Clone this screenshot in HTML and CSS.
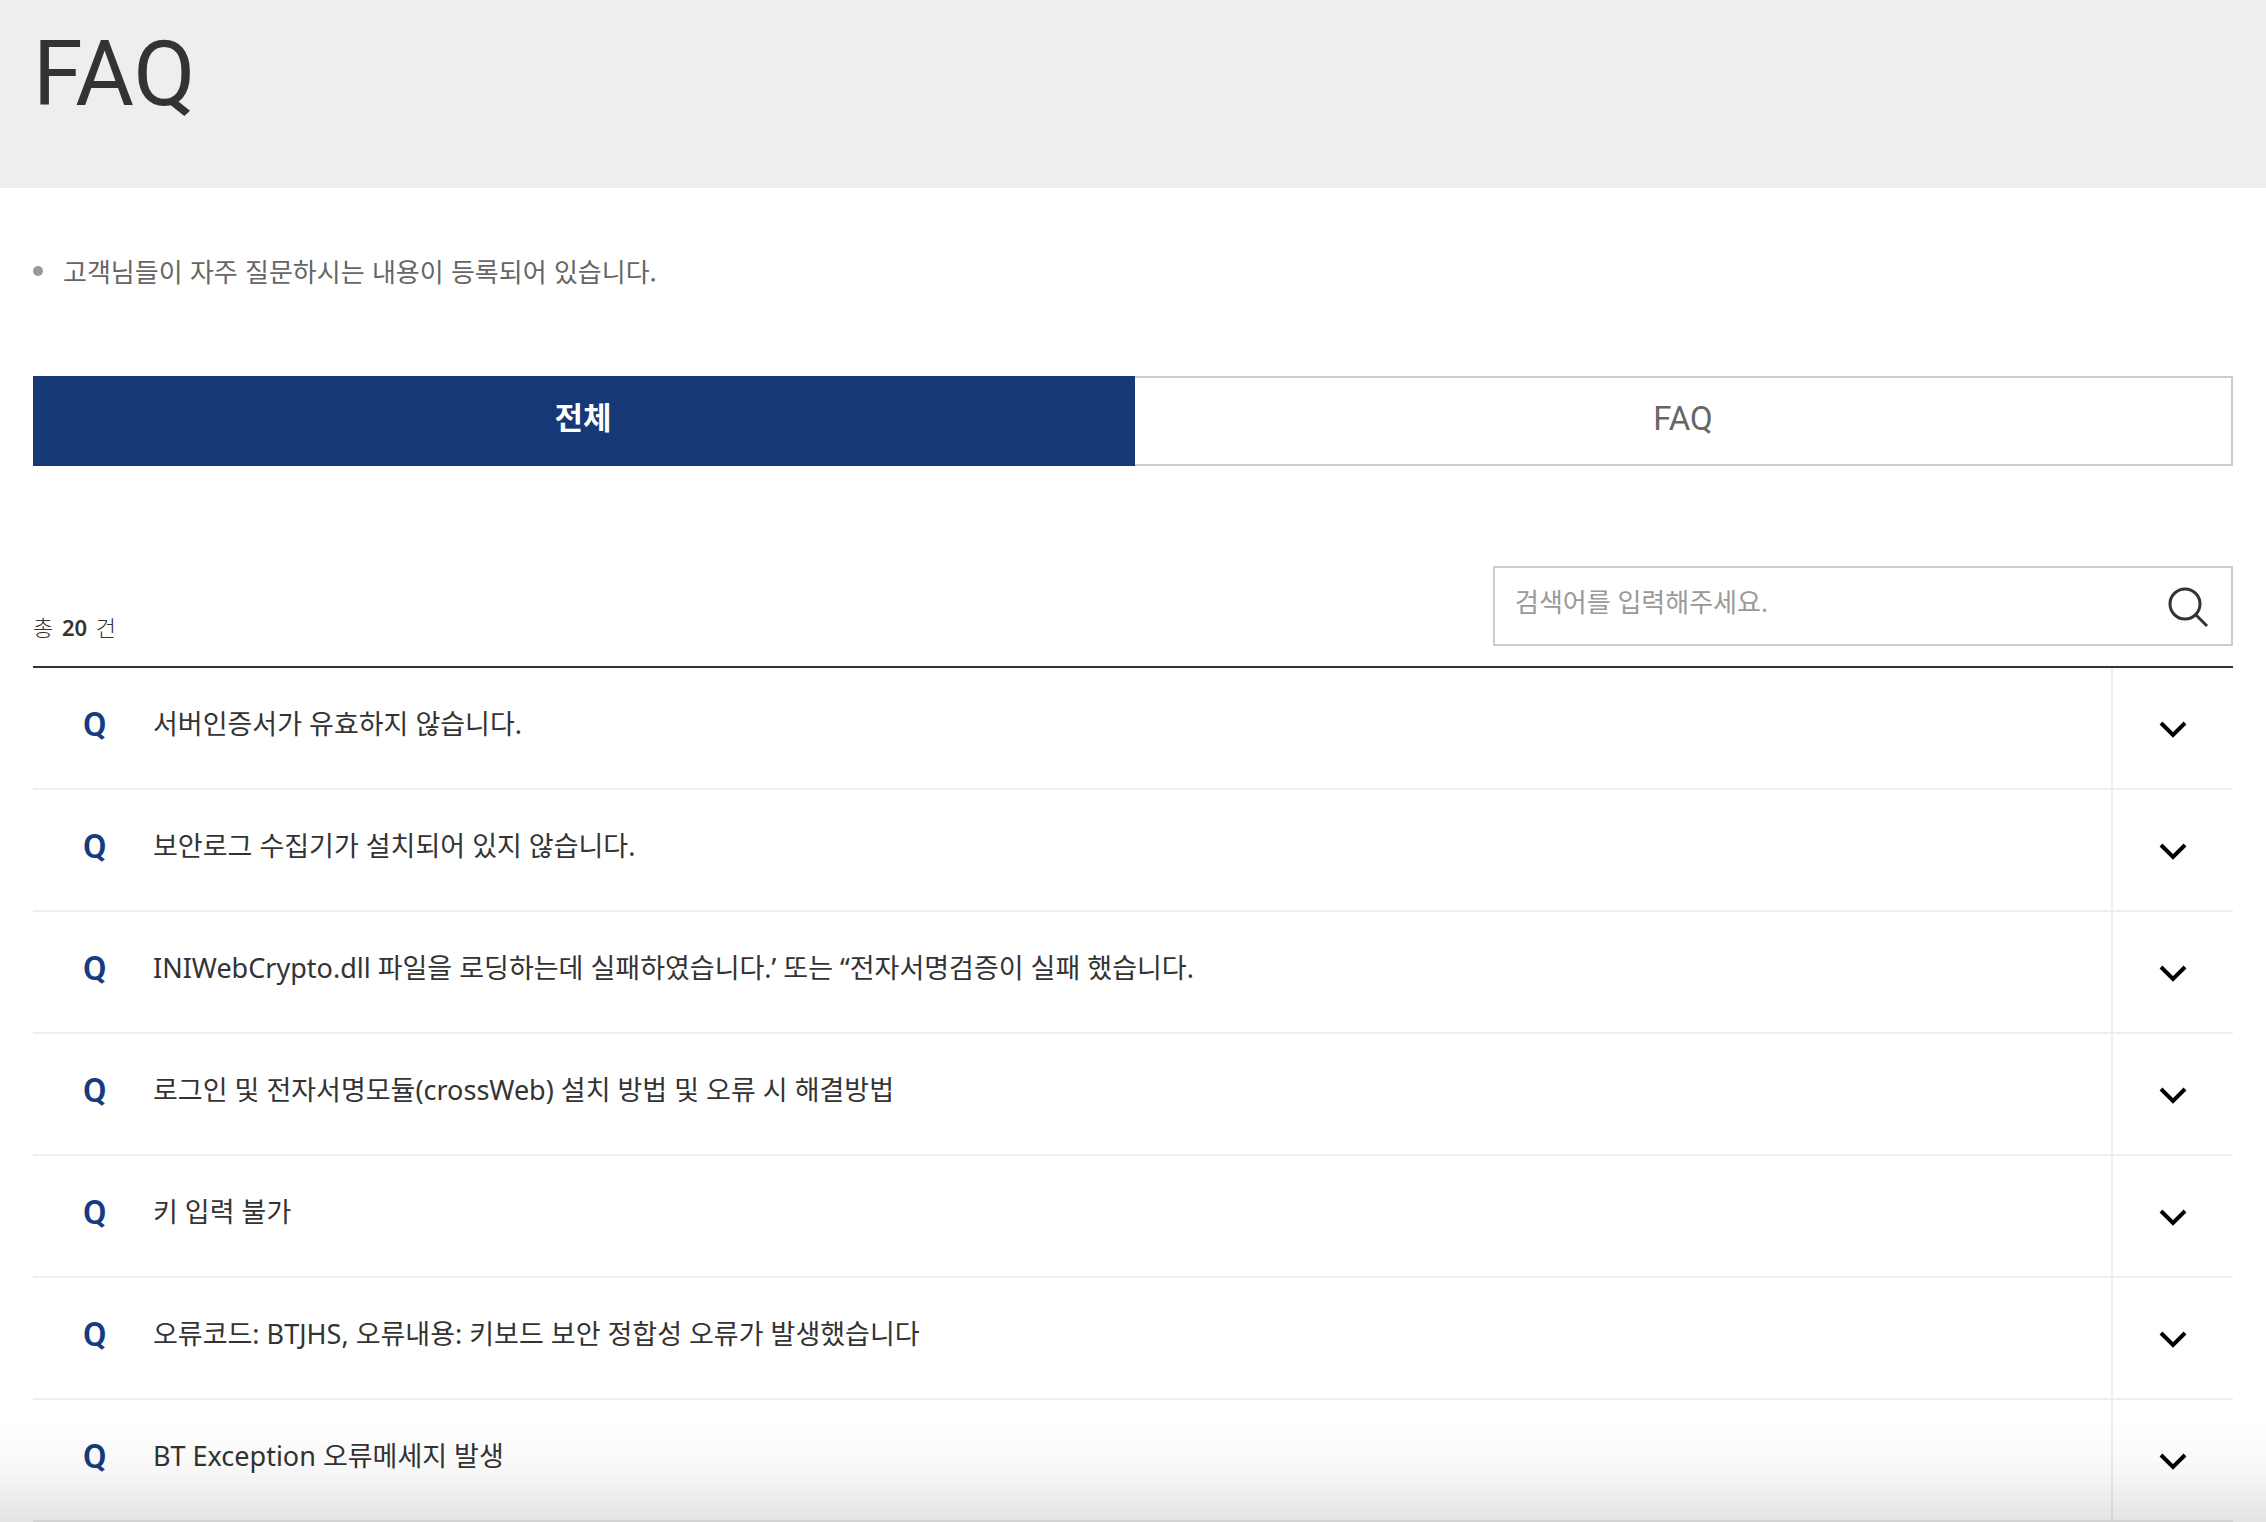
FILE: index.html
```html
<!DOCTYPE html>
<html lang="ko">
<head>
<meta charset="utf-8">
<meta name="viewport" content="width=device-width, initial-scale=1">
<title>FAQ</title>
<link rel="stylesheet" href="styles.css">
</head>
<body>
<svg class="defs" aria-hidden="true">
  <symbol id="chevron" viewBox="0 0 28 18"><path d="M2 2l12 12L26 2" fill="none" stroke="#000" stroke-width="4"/></symbol>
</svg>
<header class="page-header">
  <h1 class="page-title">FAQ</h1>
</header>
<main class="content">
  <ul class="notice">
    <li class="notice-item">고객님들이 자주 질문하시는 내용이 등록되어 있습니다.</li>
  </ul>
  <nav class="tabs" aria-label="분류">
    <a class="tab tab-active" href="#all" aria-current="page">전체</a>
    <a class="tab" href="#faq">FAQ</a>
  </nav>
  <div class="toolbar">
    <p class="total">총 <strong class="total-count">20</strong> 건</p>
    <form class="search" role="search">
      <input class="search-input" type="text" aria-label="검색어" placeholder="검색어를 입력해주세요.">
      <button class="search-button" type="submit" aria-label="검색">
        <svg class="search-icon" viewBox="0 0 42 42" fill="none" stroke="#333" stroke-width="3"><circle cx="18" cy="18" r="15"/><path d="M28.500 28.500L40 40"/></svg>
      </button>
    </form>
  </div>
  <ul class="faq-list">
    <li class="faq-item"><button class="question" type="button" aria-expanded="false"><span class="mark">Q</span><span class="question-text">서버인증서가 유효하지 않습니다.</span><span class="toggle"><svg class="chevron"><use href="#chevron"/></svg></span></button></li>
    <li class="faq-item"><button class="question" type="button" aria-expanded="false"><span class="mark">Q</span><span class="question-text">보안로그 수집기가 설치되어 있지 않습니다.</span><span class="toggle"><svg class="chevron"><use href="#chevron"/></svg></span></button></li>
    <li class="faq-item"><button class="question" type="button" aria-expanded="false"><span class="mark">Q</span><span class="question-text">INIWebCrypto.dll 파일을 로딩하는데 실패하였습니다.’ 또는 “전자서명검증이 실패 했습니다.</span><span class="toggle"><svg class="chevron"><use href="#chevron"/></svg></span></button></li>
    <li class="faq-item"><button class="question" type="button" aria-expanded="false"><span class="mark">Q</span><span class="question-text">로그인 및 전자서명모듈(crossWeb) 설치 방법 및 오류 시 해결방법</span><span class="toggle"><svg class="chevron"><use href="#chevron"/></svg></span></button></li>
    <li class="faq-item"><button class="question" type="button" aria-expanded="false"><span class="mark">Q</span><span class="question-text">키 입력 불가</span><span class="toggle"><svg class="chevron"><use href="#chevron"/></svg></span></button></li>
    <li class="faq-item"><button class="question" type="button" aria-expanded="false"><span class="mark">Q</span><span class="question-text">오류코드: BTJHS, 오류내용: 키보드 보안 정합성 오류가 발생했습니다</span><span class="toggle"><svg class="chevron"><use href="#chevron"/></svg></span></button></li>
    <li class="faq-item"><button class="question" type="button" aria-expanded="false"><span class="mark">Q</span><span class="question-text">BT Exception 오류메세지 발생</span><span class="toggle"><svg class="chevron"><use href="#chevron"/></svg></span></button></li>
  </ul>
</main>
<div class="bottom-fade"></div>
</body>
</html>
```
FILE: styles.css
```css
* { box-sizing: border-box; }

body {
  margin: 0;
  background: #fff;
  color: #333;
  font-family: "Noto Sans", "Noto Sans CJK KR", sans-serif;
  font-size: 27px;
  line-height: 40px;
}

button, input { font: inherit; color: inherit; }
ul { margin: 0; padding: 0; list-style: none; }
.defs { display: none; }

.page-header {
  padding: 15px 33px 53px;
  background: #edeef0;
}
.page-title {
  margin: 0;
  font-family: Roboto, "Noto Sans CJK KR", sans-serif;
  font-size: 90px;
  font-weight: 400;
  line-height: 120px;
}

.content { padding: 0 33px; }

.notice { padding: 64px 0; }
.notice-item {
  display: flex;
  align-items: center;
  gap: 20px;
  height: 60px;
  padding-bottom: 22px;
  color: #666;
  font-family: "Noto Sans CJK KR", sans-serif;
  font-size: 26px;
}
.notice-item::before {
  content: "";
  width: 10px;
  height: 10px;
  border-radius: 50%;
  background: #999;
}

.tabs {
  display: grid;
  grid-template-columns: 1102fr 1098fr;
  font-family: Roboto, "Noto Sans CJK KR", sans-serif;
  font-size: 33px;
}
.tab {
  height: 90px;
  border: 2px solid #ccc;
  border-left: 0;
  color: #666;
  line-height: 82px;
  text-align: center;
  text-decoration: none;
}
.tab-active {
  border-color: #163877;
  background: #163877;
  color: #fff;
  font-size: 31px;
  font-weight: 700;
}

.toolbar {
  display: flex;
  justify-content: space-between;
  align-items: flex-end;
  padding: 100px 0 20px;
}
.total {
  margin: 0;
  font-size: 22px;
  font-weight: 300;
  line-height: 38px;
}
.total-count { margin: 0 3px; font-weight: 600; }
.search {
  display: flex;
  align-items: center;
  width: 740px;
  height: 80px;
  border: 2px solid #ccc;
}
.search-input {
  flex: 1;
  min-width: 0;
  padding: 0 0 8px 20px;
  border: 0;
  outline: 0;
  background: none;
  font-size: 26px;
}
.search-input::placeholder { color: #999; opacity: 1; }
.search-button {
  display: flex;
  padding: 2px 22px 0;
  border: 0;
  background: none;
}
.search-icon { width: 42px; height: 42px; }

.faq-list { border-top: 2px solid #333; }
.faq-item { border-bottom: 2px solid #eee; }
.question {
  display: grid;
  grid-template-columns: 120px 1fr 122px;
  align-items: center;
  width: 100%;
  height: 120px;
  padding: 0;
  border: 0;
  background: none;
  text-align: left;
}
.mark {
  padding: 0 0 8px 50px;
  color: #163b80;
  font-family: Roboto, "Noto Sans CJK KR", sans-serif;
  font-size: 34px;
  font-weight: 600;
}
.question-text { padding-bottom: 8px; }
.toggle {
  display: grid;
  place-items: center;
  height: 100%;
  padding-top: 4px;
  border-left: 2px solid #eee;
}
.chevron { width: 28px; height: 18px; }

.bottom-fade {
  position: fixed;
  right: 0;
  bottom: 0;
  left: 0;
  height: 100px;
  background: linear-gradient(transparent, rgba(0, 0, 0, 0.03) 50%, rgba(0, 0, 0, 0.11));
  pointer-events: none;
}
```
